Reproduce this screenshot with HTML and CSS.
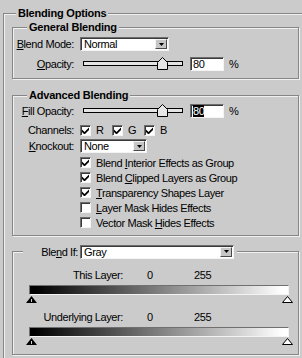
FILE: index.html
```html
<!DOCTYPE html>
<html lang="en">
<head>
    <meta charset="UTF-8">
    <title>Blending Options</title>
    <link rel="stylesheet" href="styles.css">
</head>
<body>
    <div class="outer">
        <div class="title">Blending Options</div>

        <div class="group general">
            <div class="title">General Blending</div>
            <div class="row first">
                <span class="label"><u>B</u>lend Mode:</span>
                <div class="select mode">
                    <span class="select-text">Normal</span>
                    <span class="select-btn"><svg width="5" height="3" viewBox="0 0 5 3"><polygon points="0,0 5,0 2.5,3" fill="#000"/></svg></span>
                </div>
            </div>
            <div class="row second">
                <span class="label"><u>O</u>pacity:</span>
                <div class="slider">
                    <div class="track"></div>
                    <svg class="thumb" width="11" height="13" viewBox="0 0 11 13"><polygon points="0.5,12.5 0.5,5.5 5.5,0.5 10.5,5.5 10.5,12.5" fill="#e6e6e6" stroke="#000"/></svg>
                </div>
                <span class="field">80</span>
                <span class="pct">%</span>
            </div>
        </div>

        <div class="group advanced">
            <div class="title">Advanced Blending</div>
            <div class="row fill">
                <span class="label"><u>F</u>ill Opacity:</span>
                <div class="slider">
                    <div class="track"></div>
                    <svg class="thumb" width="11" height="13" viewBox="0 0 11 13"><polygon points="0.5,12.5 0.5,5.5 5.5,0.5 10.5,5.5 10.5,12.5" fill="#e6e6e6" stroke="#000"/></svg>
                </div>
                <span class="field"><span class="selected">80</span></span>
                <span class="pct">%</span>
            </div>
            <div class="row channels">
                <span class="label">Channels:</span>
                <span class="channel"><span class="box"><svg width="7" height="7" viewBox="0 0 7 7"><polygon points="0,2.5 2.5,5 7,0.5 7,3 2.5,7.5 0,5" fill="#000"/></svg></span>R</span>
                <span class="channel"><span class="box"><svg width="7" height="7" viewBox="0 0 7 7"><polygon points="0,2.5 2.5,5 7,0.5 7,3 2.5,7.5 0,5" fill="#000"/></svg></span>G</span>
                <span class="channel"><span class="box"><svg width="7" height="7" viewBox="0 0 7 7"><polygon points="0,2.5 2.5,5 7,0.5 7,3 2.5,7.5 0,5" fill="#000"/></svg></span>B</span>
            </div>
            <div class="row knockout">
                <span class="label"><u>K</u>nockout:</span>
                <div class="select ko">
                    <span class="select-text">None</span>
                    <span class="select-btn"><svg width="5" height="3" viewBox="0 0 5 3"><polygon points="0,0 5,0 2.5,3" fill="#000"/></svg></span>
                </div>
            </div>
            <div class="check first-check">
                <span class="box"><svg width="7" height="7" viewBox="0 0 7 7"><polygon points="0,2.5 2.5,5 7,0.5 7,3 2.5,7.5 0,5" fill="#000"/></svg></span>
                <span>Blend <u>I</u>nterior Effects as Group</span>
            </div>
            <div class="check">
                <span class="box"><svg width="7" height="7" viewBox="0 0 7 7"><polygon points="0,2.5 2.5,5 7,0.5 7,3 2.5,7.5 0,5" fill="#000"/></svg></span>
                <span>Blend <u>C</u>lipped Layers as Group</span>
            </div>
            <div class="check">
                <span class="box"><svg width="7" height="7" viewBox="0 0 7 7"><polygon points="0,2.5 2.5,5 7,0.5 7,3 2.5,7.5 0,5" fill="#000"/></svg></span>
                <span><u>T</u>ransparency Shapes Layer</span>
            </div>
            <div class="check">
                <span class="box"></span>
                <span><u>L</u>ayer Mask Hides Effects</span>
            </div>
            <div class="check">
                <span class="box"></span>
                <span>Vector Mask <u>H</u>ides Effects</span>
            </div>
        </div>

        <div class="group blendif">
            <div class="blendif-head">
                <span class="label">Ble<u>n</u>d If:</span>
                <div class="select gray">
                    <span class="select-text">Gray</span>
                    <span class="select-btn"><svg width="5" height="3" viewBox="0 0 5 3"><polygon points="0,0 5,0 2.5,3" fill="#000"/></svg></span>
                </div>
            </div>

            <div class="layer-row">
                <span class="layer-label">This Layer:</span>
                <span class="lo">0</span>
                <span>255</span>
            </div>
            <div class="bar"></div>
            <div class="markers">
                <svg width="11" height="7" viewBox="0 0 11 7"><polygon points="5.5,0 11,7 0,7" fill="#000"/><line x1="5.5" y1="3" x2="5.5" y2="6" stroke="#cfcfcf"/></svg>
                <svg width="11" height="7" viewBox="0 0 11 7"><polygon points="5.5,0.5 10.5,6.5 0.5,6.5" fill="#fff" stroke="#000"/></svg>
            </div>

            <div class="layer-row lower">
                <span class="layer-label">Underlying Layer:</span>
                <span class="lo">0</span>
                <span>255</span>
            </div>
            <div class="bar"></div>
            <div class="markers">
                <svg width="11" height="7" viewBox="0 0 11 7"><polygon points="5.5,0 11,7 0,7" fill="#000"/><line x1="5.5" y1="3" x2="5.5" y2="6" stroke="#cfcfcf"/></svg>
                <svg width="11" height="7" viewBox="0 0 11 7"><polygon points="5.5,0.5 10.5,6.5 0.5,6.5" fill="#fff" stroke="#000"/></svg>
            </div>
        </div>
    </div>
</body>
</html>
```

FILE: styles.css
```css
body {
    margin: 0;
    background-color: #cbcbcb;
    font-family: "Liberation Sans", Arial, sans-serif;
    font-size: 11px;
    letter-spacing: -0.4px;
    color: #000;
    overflow: hidden;
}

/* the outer frame runs off the right and bottom of the window */
.outer {
    width: 299px;
    margin: 13px 0 0 3px;
    padding-bottom: 3px;
    border: 1px solid #868686;
    border-right: none;
    border-bottom: none;
    box-shadow: inset 1px 1px 0 #f0f0f0;
    box-sizing: border-box;
}

.title {
    width: fit-content;
    margin: -7px 0 0 12px;
    padding: 0 2px;
    background-color: #cbcbcb;
    font-weight: bold;
    letter-spacing: -0.2px;
    line-height: 13px;
}

.group {
    width: 287px;
    margin: 7px 0 0 8px;
    border: 1px solid #868686;
    box-shadow: inset 1px 1px 0 #f0f0f0, 1px 1px 0 #f0f0f0;
    box-sizing: border-box;
}
.group .title { margin-left: 14px; }

.general { padding-bottom: 7px; }
.advanced { margin-top: 16px; padding-bottom: 5px; }
.blendif { margin-top: 15px; padding-bottom: 9px; }

.row {
    display: flex;
    align-items: center;
    height: 14px;
}
.general .first { margin-top: 3px; }
.general .second { margin-top: 6px; }
.advanced .fill { margin-top: 2px; }
.advanced .channels { margin-top: 5px; }
.advanced .knockout { margin-top: 2px; }

.label {
    flex: none;
    width: 61px;
    margin-right: 6px;
    text-align: right;
}

/* dropdowns */
.select {
    display: flex;
    height: 14px;
    background-color: #fff;
    border: 1px solid;
    border-color: #6d6d6d #f4f4f4 #f4f4f4 #6d6d6d;
    box-shadow: inset 1px 1px 0 #3a3a3a;
    box-sizing: border-box;
}
.select.mode { width: 89px; }
.select.ko { width: 67px; }
.select.gray { width: 154px; }

.select-text {
    flex: 1;
    padding-left: 3px;
    line-height: 12px;
}
.select-btn {
    display: flex;
    align-items: center;
    justify-content: center;
    width: 12px;
    margin: 1px 1px 1px 0;
    border: 1px solid;
    border-color: #f4f4f4 #4a4a4a #4a4a4a #f4f4f4;
    background-color: #c6c6c6;
    box-sizing: border-box;
}

/* sliders */
.slider {
    position: relative;
    flex: none;
    width: 100px;
    height: 14px;
    margin: 0 7px 0 3px;
}
.track {
    margin-top: 4px;
    height: 5px;
    border: 1px solid #000;
    background-color: #e4e4e4;
    box-sizing: border-box;
}
.thumb {
    position: absolute;
    left: 74px;
    top: 0;
}

.field {
    width: 34px;
    height: 14px;
    padding-left: 2px;
    background-color: #fff;
    border: 1px solid;
    border-color: #6d6d6d #f4f4f4 #f4f4f4 #6d6d6d;
    box-shadow: inset 1px 1px 0 #3a3a3a;
    box-sizing: border-box;
    line-height: 12px;
}
.selected {
    background-color: #000;
    color: #fff;
}
.pct { margin-left: 5px; }

/* checkboxes */
.box {
    display: flex;
    align-items: center;
    justify-content: center;
    flex: none;
    width: 11px;
    height: 11px;
    margin-right: 5px;
    background-color: #fff;
    border: 1px solid;
    border-color: #6d6d6d #f4f4f4 #f4f4f4 #6d6d6d;
    box-shadow: inset 1px 1px 0 #3a3a3a;
    box-sizing: border-box;
}
.channel {
    display: flex;
    align-items: center;
    width: 32px;
}
.check {
    display: flex;
    align-items: center;
    height: 15px;
    padding-left: 67px;
}
.first-check { margin-top: 2px; }

/* blend if */
.blendif-head {
    display: flex;
    align-items: center;
    width: fit-content;
    height: 15px;
    margin: -8px 0 0 10px;
    padding-right: 3px;
    background-color: #cbcbcb;
}
.blendif-head .label {
    width: 55px;
    margin-right: 2px;
}

.layer-row {
    display: flex;
    height: 13px;
    line-height: 13px;
    margin-top: 10px;
}
.layer-row.lower { margin-top: 8px; }
.layer-label {
    width: 110px;
    text-align: right;
}
.lo {
    width: 47px;
    margin-left: 24px;
}

.bar {
    width: 260px;
    height: 10px;
    margin: 3px 0 0 16px;
    border: 1px solid;
    border-color: #707070 #f4f4f4 #f4f4f4 #707070;
    box-sizing: border-box;
    background: linear-gradient(to right, #000 2%, #fff 98%);
}
.markers {
    display: flex;
    justify-content: space-between;
    width: 267px;
    height: 7px;
    margin: 1px 0 0 13px;
}
.markers svg { display: block; }
```
